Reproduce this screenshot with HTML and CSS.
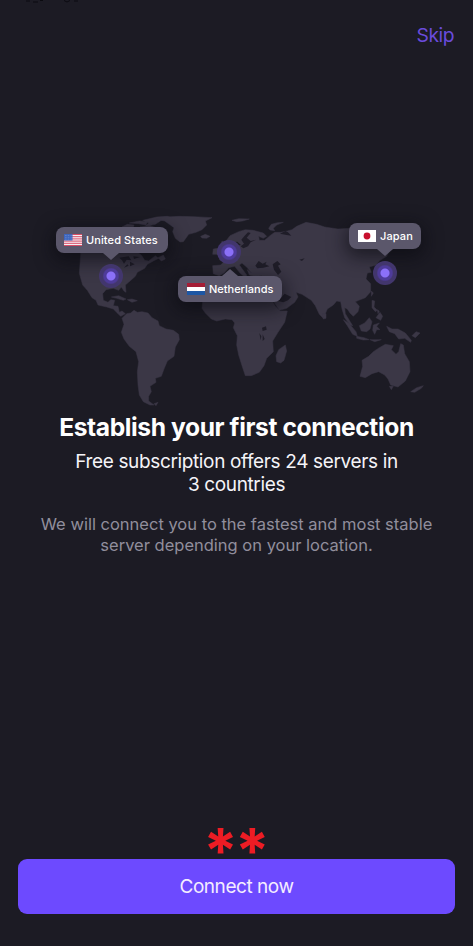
FILE: index.html
```html
<!DOCTYPE html>
<html lang="en">
<head>
<meta charset="utf-8">
<meta name="viewport" content="width=device-width, initial-scale=1">
<title>Establish your first connection</title>
<link rel="stylesheet" href="styles.css">
</head>
<body>
<main class="screen">
  <header class="topbar">
    <svg class="status-edge" viewBox="0 0 60 3" aria-hidden="true"><path d="M0 1h4M7 2h5M14 .5h3M38 .5l3 1.5 3-1.5M48 1h4"/></svg>
    <a class="skip">Skip</a>
  </header>

  <section class="map">
    <svg class="world" viewBox="0 0 1140 615" aria-hidden="true">
      <g class="land">
        <path d="M92 150 L88 205 L98 240 L112 256 L126 278 L138 286 L144 300 L170 306 L190 312 L204 326 L212 334 L226 326 L216 318 L208 322 L204 304 L190 302 L194 286 L182 284 L174 292 L160 286 L158 266 L168 254 L190 250 L206 256 L214 246 L222 258 L228 262 L226 240 L240 228 L256 214 L262 202 L284 190 L292 178 L310 168 L326 160 L316 152 L296 168 L284 166 L274 150 L262 142 L248 132 L236 118 L214 96 L92 96Z"/>
        <path d="M184 276 L206 272 L228 282 L220 286 L200 280Z M232 284 L246 282 L262 287 L246 292Z M324 158 L340 150 L346 162 L334 168Z"/>
        <path d="M216 66 L232 58 L252 60 L250 66Z M238 54 L268 48 L292 50 L288 60 L266 56Z M278 46 L320 36 L352 34 L364 38 L334 46 L316 58 L286 64 L296 54Z M270 66 L300 62 L318 68 L344 84 L350 98 L332 100 L316 86 L296 76Z"/>
        <path d="M318 42 L350 36 L388 34 L432 35 L486 38 L466 48 L470 60 L456 74 L438 82 L416 88 L400 110 L390 111 L376 100 L368 80 L372 68 L358 58 L344 48Z"/>
        <path d="M452 94 L466 88 L480 94 L470 100 L456 99Z M546 46 L566 41 L598 42 L578 48 L560 50Z M656 70 L664 58 L682 53 L700 52 L680 60 L670 70 L674 77 L660 75Z"/>
        <path d="M230 326 L216 340 L222 358 L214 382 L222 402 L238 424 L258 440 L266 470 L262 500 L264 540 L268 570 L280 590 L300 600 L312 600 L296 588 L296 574 L304 560 L300 544 L318 532 L316 520 L334 514 L342 492 L352 468 L372 454 L376 426 L388 404 L386 388 L370 376 L348 372 L328 362 L324 348 L306 338 L294 324 L276 320 L262 322 L252 316 L242 324Z M312 596 L324 592 L318 602Z"/>
        <path d="M460 270 L456 310 L466 324 L484 342 L500 348 L526 342 L546 344 L554 354 L550 368 L562 392 L560 420 L566 450 L576 482 L586 512 L604 512 L628 502 L642 482 L650 460 L670 440 L668 408 L684 382 L704 352 L712 318 L690 318 L676 304 L660 276 L628 264 L580 264 L540 246 L498 248Z"/>
        <path d="M706 420 L710 438 L702 466 L692 474 L680 470 L678 452 L686 434Z"/>
        <path d="M488 182 L512 180 L522 170 L508 164 L512 154 L530 146 L548 138 L560 124 L574 120 L562 110 L544 112 L528 108 L540 92 L566 80 L586 74 L610 76 L640 84 L650 94 L640 100 L626 94 L628 106 L644 106 L660 92 L674 82 L692 82 L712 78 L726 74 L740 64 L768 52 L800 58 L824 66 L864 72 L900 70 L970 84 L1030 94 L1080 104 L1074 120 L1020 134 L1010 154 L990 166 L978 180 L958 186 L964 202 L952 204 L948 222 L962 236 L962 260 L946 278 L926 286 L916 290 L928 304 L924 320 L910 334 L900 324 L892 312 L884 308 L886 326 L898 346 L908 362 L900 360 L884 338 L876 312 L872 290 L860 288 L850 300 L832 312 L820 340 L808 328 L796 302 L784 286 L756 268 L738 262 L744 276 L734 292 L710 310 L688 316 L672 292 L660 270 L650 244 L636 240 L636 212 L614 214 L598 210 L592 194 L604 204 L592 188 L576 174 L568 180 L590 210 L588 220 L570 204 L554 184 L536 188 L522 204 L508 212 L490 206Z"/>
        <path d="M502 148 L510 132 L516 108 L528 116 L530 138 L516 150Z M488 148 L490 132 L504 130 L504 148Z"/>
        <path d="M818 326 L828 326 L828 340 L820 342Z M964 258 L970 264 L964 274Z M966 286 L974 288 L972 306 L982 316 L976 320 L966 308Z M978 338 L990 322 L998 334 L992 346Z M982 314 L988 318 L984 326Z"/>
        <path d="M880 344 L896 354 L918 380 L922 394 L908 388 L892 362Z M920 394 L942 398 L958 404 L940 405 L920 400Z M928 362 L944 354 L958 338 L966 350 L960 372 L950 380 L934 378Z M970 360 L988 354 L980 364 L990 374 L980 374 L974 388 L968 376Z M960 404 L994 404 L974 410Z M1010 364 L1026 372 L1044 372 L1066 384 L1084 406 L1082 412 L1064 400 L1046 402 L1034 386 L1018 380Z M1086 392 L1098 380 L1110 384 L1096 398Z"/>
        <path d="M930 514 L938 484 L936 466 L956 454 L970 440 L988 428 L1006 418 L1030 422 L1024 434 L1038 448 L1046 440 L1052 416 L1060 420 L1064 446 L1078 470 L1080 500 L1066 528 L1044 546 L1022 540 L1014 522 L1004 510 L986 500 L966 506 L946 518Z M1018 544 L1030 544 L1024 554Z M1082 560 L1100 548 L1120 542 L1114 550 L1094 562Z"/>
      </g>
      <g class="water">
        <path d="M208 158 L236 154 L244 166 L230 164 L222 176 L216 166Z M240 170 L254 178 L240 184Z M222 188 L232 178 L236 182Z M250 154 L270 156 L252 162Z"/>
        <path d="M572 124 L582 116 L574 104 L584 92 L594 82 L602 84 L590 98 L602 108 L618 104 L602 112 L594 124 L580 130Z"/>
        <path d="M616 182 L626 168 L638 176 L650 170 L646 178 L658 184 L640 188 L622 190Z M668 178 L682 168 L692 178 L684 182 L694 200 L684 210 L672 194Z M748 164 L764 160 L756 168Z"/>
        <path d="M636 368 L648 364 L650 374 L638 378Z M628 384 L634 394 L632 406Z M638 388 L644 402 L638 408Z M700 292 L714 286 L724 276 L704 266 L684 288Z"/>
        <path d="M690 86 L706 78 L714 82 L724 92 L710 90Z"/>
      </g>
    </svg>

    <div class="tip tip-us">
      <svg class="flag" viewBox="0 0 18 12"><path fill="#f5eef3" d="M0 0h18v12H0z"/><path stroke="#d94d66" stroke-width="1" d="M0 .5h18M0 2.7h18M0 4.9h18M0 7.1h18M0 9.3h18M0 11.5h18"/><path fill="#3d65bd" d="M0 0h8.5v6.5H0z"/><path stroke="#9cb3e3" stroke-width=".6" stroke-dasharray=".6 1" d="M1 1.5h7M1 3.3h7M1 5.1h7"/></svg>
      <span>United States</span>
    </div>
    <div class="tip tip-nl">
      <svg class="flag" viewBox="0 0 18 12"><path fill="#fff" d="M0 0h18v12H0z"/><path fill="#a51e36" d="M0 0h18v4H0z"/><path fill="#1e57a4" d="M0 8h18v4H0z"/></svg>
      <span>Netherlands</span>
    </div>
    <div class="tip tip-jp">
      <svg class="flag" viewBox="0 0 18 12"><path fill="#fff" d="M0 0h18v12H0z"/><circle cx="9" cy="6" r="3.4" fill="#c8102e"/></svg>
      <span>Japan</span>
    </div>

    <i class="dot dot-us"></i>
    <i class="dot dot-nl"></i>
    <i class="dot dot-jp"></i>
  </section>

  <section class="copy">
    <h1>Establish your first connection</h1>
    <p class="lead">Free subscription offers 24 servers in<br>3 countries</p>
    <p class="note">We will connect you to the fastest and most stable<br>server depending on your location.</p>
  </section>

  <footer class="actions">
    <div class="stars">**</div>
    <button class="connect">Connect now</button>
  </footer>
</main>
</body>
</html>
```
FILE: styles.css
```css
* { box-sizing: border-box; }
body {
  margin: 0;
  background: #1c1b24;
  color: #fff;
  font-family: Inter, "Liberation Sans", sans-serif;
}
.screen {
  display: flex;
  flex-direction: column;
  height: 946px;
  overflow: hidden;
}
.topbar {
  display: flex;
  justify-content: space-between;
  align-items: flex-start;
  height: 205px;
  padding: 0 19px 0 26px;
}
.status-edge { width: 60px; height: 3px; fill: none; stroke: #0b0b10; }
.skip {
  margin-top: 23px;
  font-size: 19.3px;
  line-height: 24px;
  letter-spacing: -0.5px;
  color: #6a4bdc;
}
.map {
  position: relative;
  width: 380px;
  height: 205px;
  margin-left: 50px;
  flex: none;
}
.world { display: block; width: 380px; height: 205px; }
.land { fill: #3b3746; stroke: #3b3746; stroke-width: 1.5; }
.water { fill: #1f1d28; }
.dot {
  position: absolute;
  width: 24px;
  height: 24px;
  border-radius: 50%;
  background: radial-gradient(circle, #8b70f8 0 4px, #4e3b9a 5px 7px, #42366d 8.5px 12px);
}
.dot-us { left: 49px; top: 59px; }
.dot-nl { left: 167px; top: 35px; }
.dot-jp { left: 323px; top: 56px; }
.tip {
  position: absolute;
  display: flex;
  align-items: center;
  gap: 4px;
  height: 26px;
  padding-left: 8px;
  border-radius: 8px;
  background: #5b576b;
  box-shadow: 0 5px 18px 3px rgba(10, 9, 16, .62);
  font-size: 11px;
  font-weight: 500;
  letter-spacing: 0.1px;
  white-space: nowrap;
}
.tip::after {
  content: "";
  position: absolute;
  top: 26px;
  left: var(--arrow);
  border: solid transparent;
  border-width: 7px 8px 0;
  border-top-color: #5b576b;
}
.tip-us { left: 6px; top: 22px; width: 112px; --arrow: 47px; }
.tip-nl { left: 128px; top: 71px; width: 104px; padding-left: 9px; letter-spacing: 0; --arrow: 44px; }
.tip-nl::after { top: -7px; border-width: 0 8px 7px; border-bottom-color: #5b576b; }
.tip-jp { left: 299px; top: 18px; width: 72px; padding-left: 9px; --arrow: 28px; }
.flag { width: 18px; height: 12px; flex: none; }
.copy { text-align: center; }
h1 {
  margin: 2px 0 0;
  font-size: 24.6px;
  line-height: 30px;
  font-weight: 700;
  letter-spacing: -0.4px;
}
.lead {
  margin: 8px 0 0;
  font-size: 19px;
  line-height: 23px;
  letter-spacing: -0.36px;
  color: #f5f4f8;
}
.note {
  margin: 18px 0 0;
  font-size: 16.5px;
  line-height: 20.5px;
  color: #918e9c;
}
.actions {
  display: flex;
  flex-direction: column;
  align-items: center;
  margin-top: auto;
  padding: 0 18px 32px;
}
.stars {
  height: 38px;
  margin-left: -3px;
  font-size: 62px;
  line-height: 60px;
  letter-spacing: -3px;
  font-weight: 700;
  color: #ed1c24;
}
.connect {
  width: 437px;
  height: 55px;
  border: 0;
  border-radius: 9px;
  background: #6d4aff;
  color: #f4edff;
  font: 400 19px Inter, sans-serif;
  letter-spacing: -0.45px;
}
```
